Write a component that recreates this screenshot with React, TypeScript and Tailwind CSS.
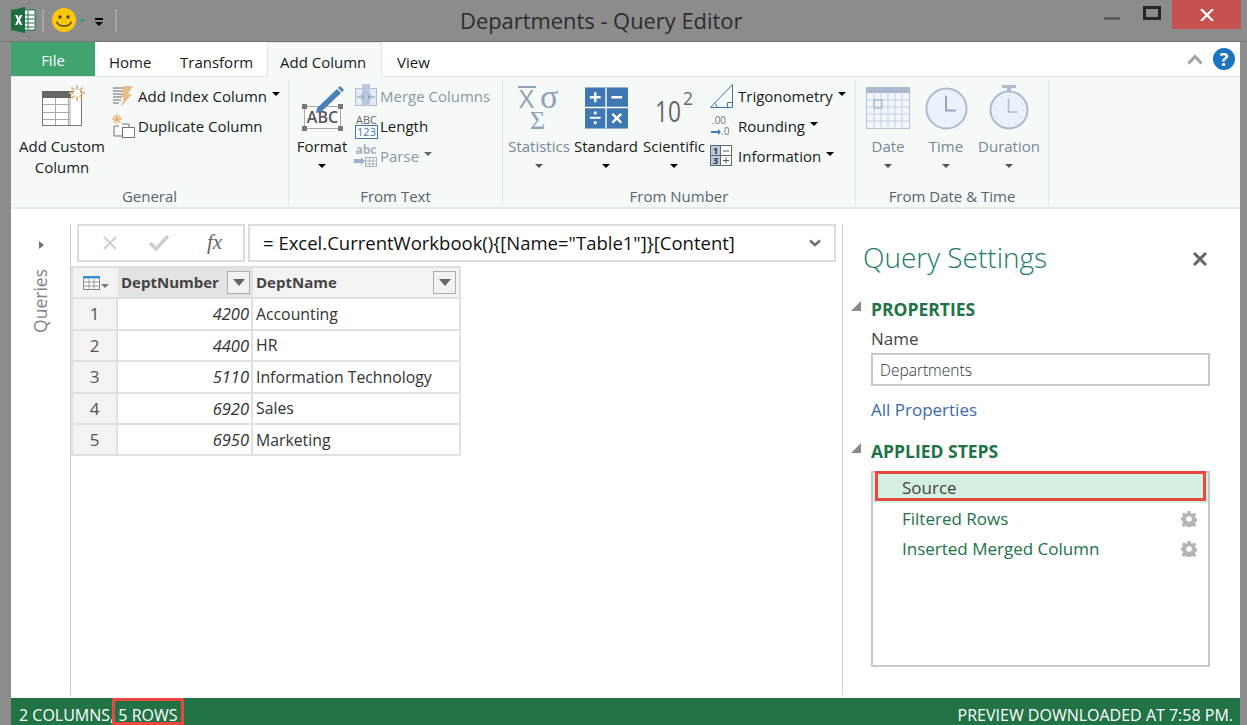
const FONT = "font-['Open_Sans','Noto_Sans',sans-serif]";

function Caret({ className = "border-t-black" }: { className?: string }) {
  return <span className={`inline-block w-0 h-0 border-x-[4px] border-x-transparent border-t-[4px] ${className}`} />;
}

function ExcelLogo() {
  return (
    <svg width="25" height="26" viewBox="0 0 25 26">
      <rect x="11" y="3" width="13" height="20" fill="#fff" stroke="#1d6f42" />
      <path d="M12 8h11M12 12h11M12 16h11M12 20h11M17 4v18" stroke="#1d6f42" strokeWidth="1" />
      <path d="M0 3 14 0v26L0 23z" fill="#1d6f42" />
      <path d="M4 8h2.4l1.3 2.8L9 8h2.3l-2.3 5 2.4 5H9l-1.4-3-1.4 3H4l2.4-5z" fill="#fff" />
    </svg>
  );
}

function Smiley() {
  return (
    <svg width="24" height="24" viewBox="0 0 24 24">
      <circle cx="12" cy="12" r="12" fill="#fdc70c" />
      <circle cx="8" cy="9" r="1.8" fill="#594a10" />
      <circle cx="16" cy="9" r="1.8" fill="#594a10" />
      <path d="M4.5 13.5c2 6 13 6 15 0" fill="none" stroke="#594a10" strokeWidth="1.4" />
    </svg>
  );
}

function AddCustomIcon() {
  return (
    <svg width="47" height="42" viewBox="0 0 47 42">
      <rect x="3.500" y="6.500" width="39" height="34" fill="#fff" stroke="#777" />
      <rect x="3" y="6" width="29" height="7" fill="#666" />
      <path d="M4 19.500h27M4 27.500h27M4 34.500h27M16.500 13v27M29.500 13v27M31 13v27" stroke="#aaa" />
      <path d="M38 0v16M30 8h16M32.500 2.500l11 11M43.500 2.500l-11 11" stroke="#e3b77c" strokeWidth="1.800" />
      <circle cx="38" cy="8" r="3.500" fill="#fff" />
    </svg>
  );
}

function IndexIcon() {
  return (
    <svg width="22" height="22" viewBox="0 0 22 22">
      <path d="M1 3h12M1 6h11M1 9h10M1 12h9M1 15h8M1 18h6" stroke="#666" strokeWidth="1" />
      <path d="M12 1h9l-5 8h4L9 22l3-10H9z" fill="#e8bd83" />
    </svg>
  );
}

function DuplicateIcon() {
  return (
    <svg width="24" height="24" viewBox="0 0 24 24">
      <path d="M5 0v10M0 5h10M1.5 1.5l7 7M8.5 1.5l-7 7" stroke="#e3b77c" strokeWidth="1.4" />
      <path d="M2 12v10h8" fill="none" stroke="#777" />
      <path d="M2 12h5" stroke="#777" />
      <rect x="10.5" y="13.5" width="12" height="10" fill="#fff" stroke="#777" />
      <path d="M10 10h7v3" fill="none" stroke="#777" />
    </svg>
  );
}

function FormatIcon() {
  return (
    <svg width="44" height="46" viewBox="0 0 44 46">
      <rect x="4.500" y="21.500" width="36" height="22" fill="#fff" stroke="#aaa" />
      <rect x="2" y="19" width="5" height="5" fill="#777" />
      <rect x="38" y="19" width="5" height="5" fill="#777" />
      <rect x="2" y="41" width="5" height="5" fill="#777" />
      <rect x="38" y="41" width="5" height="5" fill="#777" />
      <text x="22.500" y="38" textAnchor="middle" fontSize="16" fontWeight="600" fill="#555" fontFamily="Open Sans">ABC</text>
      <path d="M17 23 37 4l4 4-20 19-5 1z" fill="#4a7fb8" />
      <path d="M38 3l2-2 4 4-2 2z" fill="#4a7fb8" />
    </svg>
  );
}

function MergeIcon() {
  return (
    <svg width="24" height="24" viewBox="0 0 24 24">
      <rect x="1.500" y="4.500" width="21" height="17" fill="#e4ebf3" stroke="#aebdd0" />
      <rect x="8" y="0" width="8" height="22" fill="#b9c8dc" />
      <path d="M3 13h6M21 13h-6M7 10l3 3-3 3M17 10l-3 3 3 3" fill="none" stroke="#7f99bb" />
    </svg>
  );
}

function LengthIcon() {
  return (
    <svg className="overflow-visible" width="25" height="25" viewBox="0 0 25 25">
      <text x="12.500" y="10" textAnchor="middle" fontSize="11" fill="#666" fontFamily="Open Sans">ABC</text>
      <rect x="1.500" y="11.500" width="22" height="13" fill="#fff" stroke="#3f77b3" />
      <text x="12.500" y="22" textAnchor="middle" fontSize="11" fill="#3f77b3" fontFamily="Open Sans">123</text>
    </svg>
  );
}

function ParseIcon() {
  return (
    <svg className="overflow-visible" width="24" height="24" viewBox="0 0 24 24">
      <text x="12" y="10" textAnchor="middle" fontSize="12" fontWeight="700" fill="#aab3bf" fontFamily="Open Sans">abc</text>
      <path d="M0 15h7v-2l4 4-4 4v-2H0z" fill="#9fb2cb" />
      <rect x="11.500" y="13.500" width="11" height="9" fill="#fff" stroke="#aab3bf" />
      <path d="M12 17h10M12 20h10M15.500 14v8M19 14v8" stroke="#aab3bf" />
    </svg>
  );
}

function StatsIcon() {
  return (
    <svg className="overflow-visible" width="44" height="46" viewBox="0 0 44 46" fill="#8fa1b8" fontFamily="Liberation Serif">
      <rect x="1" y="1" width="18" height="2" />
      <text x="2" y="23" fontSize="26" fontFamily="Open Sans">X</text>
      <text x="23" y="23" fontSize="34">σ</text>
      <text x="13" y="44" fontSize="26">Σ</text>
    </svg>
  );
}

function StandardIcon() {
  return (
    <svg className="mt-[2px]" width="43" height="42" viewBox="0 0 44 42">
      <rect width="44" height="42" fill="#3f77b3" />
      <path d="M21.500 0v42M0 20.500h44" stroke="#fff" strokeWidth="1.400" />
      <path d="M5 10h11M10.500 5v10M27 10h11" stroke="#fff" strokeWidth="2.400" />
      <path d="M5 31h11" stroke="#fff" strokeWidth="2" />
      <circle cx="10.500" cy="26" r="1.600" fill="#fff" />
      <circle cx="10.500" cy="36" r="1.600" fill="#fff" />
      <path d="M28 27l9 9M37 27l-9 9" stroke="#fff" strokeWidth="2.400" />
    </svg>
  );
}

function ScientificIcon() {
  return (
    <svg className="overflow-visible" width="44" height="44" viewBox="0 0 44 44" fill="#666" fontFamily="Open Sans">
      <text x="3" y="37" fontSize="30" textLength="26" lengthAdjust="spacingAndGlyphs">10</text>
      <text x="31" y="20" fontSize="18" textLength="10" lengthAdjust="spacingAndGlyphs">2</text>
    </svg>
  );
}

function TrigIcon() {
  return (
    <svg width="24" height="24" viewBox="0 0 24 24" fill="none" stroke="#3f77b3">
      <path d="M.5 23.500 22.500.5v23z" />
      <path d="M17.500 23.500v-5h5M7 23.500c0-2-1-3.500-2.500-4.500" />
    </svg>
  );
}

function RoundIcon() {
  return (
    <svg className="overflow-visible" width="22" height="22" viewBox="0 0 22 22" fontFamily="Open Sans" fontSize="10" fill="#777">
      <text x="2" y="9">.00</text>
      <text x="11" y="20">.0</text>
      <path d="M1 16h7v-2l3 3-3 3v-2H1z" fill="#3f77b3" />
    </svg>
  );
}

function InfoIcon() {
  return (
    <svg className="overflow-visible" width="22" height="22" viewBox="0 0 22 22" fontFamily="Open Sans" fontSize="9" fontWeight="700">
      <rect x=".5" y=".5" width="21" height="20" fill="#fff" stroke="#666" />
      <rect x="1" y="1" width="9" height="19" fill="#b6c9e0" />
      <path d="M10.500 1v19M1 10.500h20" stroke="#666" />
      <text x="3" y="9" fill="#333">1</text>
      <text x="3" y="19" fill="#333">3</text>
      <path d="M13 6h6M13 15.500h6M16 12.500v6" stroke="#555" />
    </svg>
  );
}

function DateIcon() {
  return (
    <svg className="mt-[2px]" width="44" height="42" viewBox="0 0 44 42">
      <rect x=".5" y=".5" width="43" height="41" fill="#f3f7fc" stroke="#b6c3d8" />
      <rect width="44" height="6" fill="#aab8d0" />
      <path d="M.5 13h43M.5 20h43M.5 27h43M.5 34h43M8 6v36M15 6v36M22 6v36M29 6v36M36 6v36" stroke="#c3cfe1" />
      <rect x="8" y="13" width="8" height="8" fill="none" stroke="#97a8c4" />
    </svg>
  );
}

function TimeIcon() {
  return (
    <svg className="mt-[2px]" width="43" height="43" viewBox="0 0 44 44">
      <circle cx="22" cy="22" r="20.500" fill="#ebf2fc" stroke="#aebad0" strokeWidth="2" />
      <path d="M21.500 9v15h10" fill="none" stroke="#97a6c0" strokeWidth="2" />
    </svg>
  );
}

function DurationIcon() {
  return (
    <svg className="-mt-[1px]" width="40" height="46" viewBox="0 0 40 46">
      <path d="M13 1h14v3h-5v4h-4V4h-5z" fill="#aebad0" />
      <circle cx="20" cy="26" r="18.500" fill="#ebf2fc" stroke="#aebad0" strokeWidth="2" />
      <path d="M19.500 14v14h9" fill="none" stroke="#aebad0" strokeWidth="1.400" />
      <circle cx="20" cy="26" r="14.500" fill="none" stroke="#aebad0" strokeWidth="1" strokeDasharray="1 6.600" />
    </svg>
  );
}

function Gear() {
  return (
    <svg width="16" height="16" viewBox="0 0 16 16" fill="#b5b5b5">
      <path d="M6.500 0h3l.4 2.200 1.500.6L13.300 1.500l2 2-1.300 1.900.6 1.500 2.200.4v3l-2.200.4-.6 1.500 1.300 1.900-2 2-1.900-1.300-1.500.6-.4 2.200h-3l-.4-2.200-1.500-.6-1.900 1.300-2-2L2 11.200l-.6-1.500L0 9.500v-3l1.400-.4L2 4.600.7 3.500l2-2 1.900 1.300 1.500-.6z" />
      <circle cx="8" cy="8" r="2.800" fill="#fff" />
    </svg>
  );
}

function LargeButton({ icon, label, width, muted, caret = true, caretColor }: {
  icon: React.ReactNode; label: React.ReactNode; width: string; muted?: boolean; caret?: boolean; caretColor?: string;
}) {
  return (
    <div className={`flex flex-col items-center shrink-0 ${width}`}>
      <div className="h-[51px] mt-[6px] flex items-start justify-center">{icon}</div>
      <div className={`text-center leading-[21px] whitespace-nowrap ${muted ? "text-[#7b8794]" : "text-[#1a1a1a]"}`}>{label}</div>
      {caret && <div className="h-[17px] flex items-center"><Caret className={caretColor ?? "border-t-black"} /></div>}
    </div>
  );
}

function SmallButton({ icon, label, muted, caret, iconWidth = "w-[26px]" }: {
  icon: React.ReactNode; label: string; muted?: boolean; caret?: boolean; iconWidth?: string;
}) {
  return (
    <div className="h-[30px] flex items-center whitespace-nowrap">
      <div className={`${iconWidth} shrink-0 flex items-center`}>{icon}</div>
      <span className={muted ? "text-[#8a97a6]" : "text-[#1a1a1a]"}>{label}</span>
      {caret && <span className="ml-[5px] mb-[4px] flex"><Caret className={muted ? "border-t-[#666]" : "border-t-black"} /></span>}
    </div>
  );
}

function RibbonGroup({ label, width, children }: { label: string; width: string; children: React.ReactNode }) {
  return (
    <div className={`relative flex flex-col shrink-0 border-r border-[#dfe8e5] my-[2px] ${width}`}>
      <div className="flex h-[106px] text-[15px]">{children}</div>
      <div className="h-[20px] text-center text-[15px] leading-[22px] text-[#5a6470]">{label}</div>
    </div>
  );
}

const rows: [number, string][] = [
  [4200, "Accounting"],
  [4400, "HR"],
  [5110, "Information Technology"],
  [6920, "Sales"],
  [6950, "Marketing"],
];

function FilterButton() {
  return (
    <div className="w-[23px] h-[23px] border border-[#a9b0b5] bg-[#f2f2f2] flex items-center justify-center shrink-0">
      <span className="w-0 h-0 border-x-[6px] border-x-transparent border-t-[7px] border-t-[#666]" />
    </div>
  );
}

export default function App() {
  return (
    <div className={`relative w-[1247px] h-[725px] bg-[#8c8c8c] flex flex-col overflow-hidden ${FONT}`}>
      {/* Title bar */}
      <div className="h-[42px] flex shrink-0 border-b border-[#767676]">
        <div className="w-[122px] pl-[11px] pt-[7px] flex items-start shrink-0">
          <ExcelLogo />
          <div className="w-[2px] h-[23px] mt-[2px] ml-[6px] bg-[#a5a5a5]" />
          <div className="ml-[8px] mt-px"><Smiley /></div>
          <div className="ml-[2px] mt-[12px] flex"><Caret className="border-t-[#3f9a72]" /></div>
          <div className="ml-[9px] mt-[11px] flex flex-col items-center gap-[2px]">
            <span className="w-[8px] h-[1.500px] bg-black" />
            <Caret />
          </div>
          <div className="w-[2px] h-[23px] mt-[2px] ml-[12px] bg-[#a5a5a5]" />
        </div>
        <div className="ml-[338px] pt-[5px] text-[21.900px] leading-[32px] text-[#2d2d2d] whitespace-nowrap">Departments - Query Editor</div>
        <div className="ml-auto flex items-start">
          <div className="w-[16px] h-[3px] mt-[17px] bg-[#5e5e5e]" />
          <div className="w-[18px] h-[14px] mt-[6px] ml-[23px] border-[3px] border-[#262626]" />
          <div className="w-[69px] h-[29px] ml-[11px] mr-[6px] bg-[#c75050] flex items-center justify-center">
            <svg width="14" height="12" viewBox="0 0 14 12"><path d="M1 0l12 12M13 0 1 12" stroke="#fff" strokeWidth="2.200" /></svg>
          </div>
        </div>
      </div>

      <div className="flex-1 ml-[11px] mr-[7px] bg-white flex flex-col min-h-0">
        {/* Tabs */}
        <div className="h-[35px] flex shrink-0 text-[15px] text-[#1a1a1a] border-b border-[#d9e6e2]">
          <div className="w-[84px] bg-[#41a36f] text-white text-center leading-[36px]">File</div>
          <div className="pl-[14px] pt-[9px] w-[69px]">Home</div>
          <div className="pl-[16px] pt-[9px] w-[103px]">Transform</div>
          <div className="relative h-[35px] w-[115px] border-x border-t border-[#d9e6e2] bg-[#f5f9f8] pl-[12px] pt-[8px]">Add Column</div>
          <div className="pl-[15px] pt-[9px]">View</div>
          <div className="ml-auto flex items-center pr-[5px]">
            <svg width="16" height="11" viewBox="0 0 16 11"><path d="M1.500 9.500 8 2.500l6.500 7" fill="none" stroke="#a3a3a3" strokeWidth="3" /></svg>
            <div className="ml-[10px] w-[22px] h-[22px] rounded-full bg-[#1c75bc] text-white font-bold text-[18px] leading-[22px] text-center">?</div>
          </div>
        </div>

        {/* Ribbon */}
        <div className="h-[132px] shrink-0 flex bg-[#f5f9f8] border-b-2 border-[#e4ecea]">
          <RibbonGroup label="General" width="w-[278px]">
            <div className="ml-2"><LargeButton width="w-[86px]" icon={<AddCustomIcon />} label={<>Add Custom<br />Column</>} caret={false} /></div>
            <div className="ml-[7px] pt-[2px]">
              <SmallButton icon={<IndexIcon />} label="Add Index Column" caret />
              <SmallButton icon={<DuplicateIcon />} label="Duplicate Column" />
            </div>
          </RibbonGroup>
          <RibbonGroup label="From Text" width="w-[214px]">
            <div className="ml-[6px]"><LargeButton width="w-[54px]" icon={<FormatIcon />} label="Format" /></div>
            <div className="ml-[5px] pt-[2px]">
              <SmallButton icon={<MergeIcon />} label="Merge Columns" muted />
              <SmallButton icon={<LengthIcon />} label="Length" />
              <SmallButton icon={<ParseIcon />} label="Parse" muted caret />
            </div>
          </RibbonGroup>
          <RibbonGroup label="From Number" width="w-[353px]">
            <div className="ml-[5px]"><LargeButton width="w-[62px]" icon={<StatsIcon />} label="Statistics" muted caretColor="border-t-[#555]" /></div>
            <div className="ml-[4px]"><LargeButton width="w-[64px]" icon={<StandardIcon />} label="Standard" /></div>
            <div className="ml-[4px]"><LargeButton width="w-[64px]" icon={<ScientificIcon />} label="Scientific" /></div>
            <div className="ml-[4px] pt-[2px]">
              <SmallButton icon={<TrigIcon />} label="Trigonometry" caret iconWidth="w-[28px]" />
              <SmallButton icon={<RoundIcon />} label="Rounding" caret iconWidth="w-[28px]" />
              <SmallButton icon={<InfoIcon />} label="Information" caret iconWidth="w-[28px]" />
            </div>
          </RibbonGroup>
          <RibbonGroup label="From Date &amp; Time" width="w-[193px]">
            <div className="ml-2"><LargeButton width="w-[48px]" icon={<DateIcon />} label="Date" muted caretColor="border-t-[#555]" /></div>
            <div className="ml-[10px]"><LargeButton width="w-[48px]" icon={<TimeIcon />} label="Time" muted caretColor="border-t-[#555]" /></div>
            <div className="ml-2"><LargeButton width="w-[62px]" icon={<DurationIcon />} label="Duration" muted caretColor="border-t-[#555]" /></div>
          </RibbonGroup>
        </div>

        {/* Main */}
        <div className="flex-1 flex min-h-0 pt-[15px] pb-[3px]">
          {/* Queries pane */}
          <div className="w-[60px] shrink-0 border-r border-[#cfcfcf] flex flex-col items-center pt-[17px] pl-[1px]">
            <span className="w-0 h-0 border-y-[4px] border-y-transparent border-l-[5px] border-l-[#707070]" />
            <span className="mt-[20px] [writing-mode:vertical-rl] rotate-180 text-[17.500px] leading-none text-[#7f8088]">Queries</span>
          </div>

          {/* Formula bar + grid */}
          <div className="w-[771px] shrink-0 flex flex-col">
            <div className="flex h-[38px] pl-[6px] pr-[6px] gap-[3px] shrink-0">
              <div className="w-[168px] border-2 border-[#dcdcdc] flex items-center text-[#c4c4c4]">
                <svg className="ml-[24px]" width="14" height="14" viewBox="0 0 14 14"><path d="M1 1l12 12M13 1 1 13" stroke="#cfcfcf" strokeWidth="2" /></svg>
                <svg className="ml-[31px]" width="22" height="18" viewBox="0 0 22 18"><path d="M2 9l6 6L20 2" fill="none" stroke="#cfcfcf" strokeWidth="3.500" /></svg>
                <span className="ml-[37px] font-['Liberation_Serif',serif] italic text-[21px] text-[#666]">fx</span>
              </div>
              <div className="flex-1 border-2 border-[#dcdcdc] flex items-center pl-[13px] pr-[13px] text-[18.500px] text-[#111]">
                <span className="whitespace-nowrap">= Excel.CurrentWorkbook(){"{"}[Name="Table1"]{"}"}[Content]</span>
                <svg className="ml-auto" width="12" height="8" viewBox="0 0 12 8"><path d="M1 1.500 6 6l5-4.500" fill="none" stroke="#707070" strokeWidth="2.500" /></svg>
              </div>
            </div>

            <div className="mt-[4px] w-[390px] border-2 border-[#e0e0e0] text-[15.800px] text-[#333]">
              <div className="h-[31px] flex border-b-2 border-[#e0e0e0]">
                <div className="w-[45px] shrink-0 bg-[#f3f3f3] flex items-center justify-center gap-[1px]">
                  <svg width="17" height="14" viewBox="0 0 17 14"><rect x=".5" y=".5" width="16" height="13" fill="#fff" stroke="#888" /><rect width="17" height="2.500" fill="#3a8ed6" /><path d="M1 6h15M1 10h15M6 3v10M11 3v10" stroke="#999" /></svg>
                  <span className="mt-[7px] flex"><Caret className="border-t-[#777]" /></span>
                </div>
                <div className="w-[135px] shrink-0 bg-[#e3e3e3] flex items-center justify-between pl-[3px] pr-[3px] text-[15px] font-bold text-[#444]">
                  DeptNumber
                  <FilterButton />
                </div>
                <div className="flex-1 bg-[#f3f3f3] flex items-center justify-between pl-[3px] pr-[3px] text-[15px] font-bold text-[#444]">
                  DeptName
                  <FilterButton />
                </div>
              </div>
              {rows.map(([num, name], i) => (
                <div key={num} className={i < rows.length - 1 ? "h-[31.500px] flex border-b-2 border-[#e0e0e0]" : "h-[29px] flex"}>
                  <div className="w-[45px] shrink-0 bg-[#f3f3f3] border-r-2 border-[#e0e0e0] flex items-center justify-center text-[#555] text-[17px]">{i + 1}</div>
                  <div className="w-[135px] shrink-0 border-r-2 border-[#e0e0e0] flex items-center justify-end pr-[2px] pt-[2px] text-[16.500px] italic">{num}</div>
                  <div className="flex-1 flex items-center pl-[3px] pt-[2px] whitespace-nowrap">{name}</div>
                </div>
              ))}
            </div>
          </div>

          {/* Query settings */}
          <div className="relative flex-1 border-l border-[#cfcfcf] pl-[21px] pr-[30px]">
            <div className="flex items-center h-[38px] mt-[14px]">
              <span className="-ml-[1px] text-[28px] font-light text-[#217a6b] leading-none">Query Settings</span>
              <svg className="ml-auto mt-[3px] mr-[2px]" width="16" height="16" viewBox="0 0 16 16"><path d="M2 2l12 12M14 2 2 14" stroke="#666" strokeWidth="3" /></svg>
            </div>
            <div className="relative mt-[22px] ml-[7px] font-bold text-[17.500px] leading-[22px] text-[#217346]">
              <span className="absolute -left-[20px] top-[3px] w-0 h-0 border-l-[10px] border-l-transparent border-b-[10px] border-b-[#8a8a8a]" />
              PROPERTIES
            </div>
            <div className="ml-[7px] mt-[8px] text-[17px] leading-[22px] text-[#444]">Name</div>
            <div className="ml-[7px] mt-[3px] h-[33px] border-2 border-[#c8c8c8] flex items-center pl-[7px] pt-[3px] text-[15.500px] font-light text-[#333]">Departments</div>
            <div className="ml-[7px] mt-[13px] text-[17px] leading-[22px] text-[#3e6aa8]">All Properties</div>
            <div className="relative ml-[7px] mt-[19px] font-bold text-[17.500px] leading-[22px] text-[#217346]">
              <span className="absolute -left-[20px] top-[3px] w-0 h-0 border-l-[10px] border-l-transparent border-b-[10px] border-b-[#8a8a8a]" />
              APPLIED STEPS
            </div>
            <div className="relative ml-[7px] mt-[9px] h-[196px] border-2 border-[#c8c8c8] text-[17px]">
              <div className="h-[30px] bg-[#d4f0e0] pl-[29px] pt-[4px] leading-[22px] text-[#444]">Source</div>
              <div className="h-[30px] mt-[1px] pl-[29px] pr-[11px] flex items-center justify-between text-[#217346]">Filtered Rows<Gear /></div>
              <div className="h-[30px] pl-[29px] pr-[11px] flex items-center justify-between text-[#217346]">Inserted Merged Column<Gear /></div>
              <div className="absolute -top-[2px] left-[2px] right-[2px] h-[30px] border-[3px] border-[#e8483f]" />
            </div>
          </div>
        </div>

        {/* Status bar */}
        <div className="relative h-[27px] shrink-0 bg-[#217346] flex items-center justify-between pl-[8px] pr-[7px] pt-[7px] text-[16px] text-white">
          <span>2 COLUMNS, 5 ROWS</span>
          <span>PREVIEW DOWNLOADED AT 7:58 PM.</span>
          <div className="absolute left-[101px] top-0 w-[72px] h-[27px] border-[3px] border-[#e8483f]" />
        </div>
      </div>
    </div>
  );
}
